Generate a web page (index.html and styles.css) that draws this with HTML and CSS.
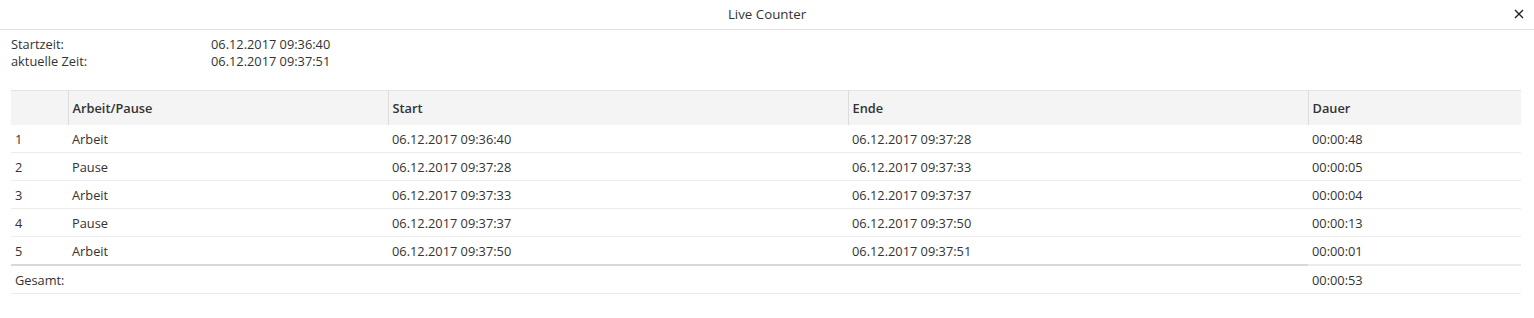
FILE: index.html
```html
<!DOCTYPE html>
<html lang="de">
<head>
    <meta charset="UTF-8">
    <title>Live Counter</title>
    <link rel="stylesheet" href="styles.css">
</head>
<body>

<div class="dialog">
    <div class="dialog-title">
        Live Counter
        <span class="dialog-close">
            <svg width="10" height="10" viewBox="0 0 10 10"><path d="M1 1L9 9M9 1L1 9" stroke="#222" stroke-width="1.4"/></svg>
        </span>
    </div>

    <div class="info">
        <div class="info-label">Startzeit:</div>
        <div class="info-value">06.12.2017 09:36:40</div>
        <div class="info-label">aktuelle Zeit:</div>
        <div class="info-value">06.12.2017 09:37:51</div>
    </div>

    <table class="counter-table">
        <colgroup>
            <col style="width: 57px">
            <col style="width: 320px">
            <col style="width: 460px">
            <col style="width: 460px">
            <col style="width: 213px">
        </colgroup>
        <thead>
            <tr>
                <th></th>
                <th>Arbeit/Pause</th>
                <th>Start</th>
                <th>Ende</th>
                <th>Dauer</th>
            </tr>
        </thead>
        <tbody>
            <tr><td>1</td><td>Arbeit</td><td>06.12.2017 09:36:40</td><td>06.12.2017 09:37:28</td><td>00:00:48</td></tr>
            <tr><td>2</td><td>Pause</td><td>06.12.2017 09:37:28</td><td>06.12.2017 09:37:33</td><td>00:00:05</td></tr>
            <tr><td>3</td><td>Arbeit</td><td>06.12.2017 09:37:33</td><td>06.12.2017 09:37:37</td><td>00:00:04</td></tr>
            <tr><td>4</td><td>Pause</td><td>06.12.2017 09:37:37</td><td>06.12.2017 09:37:50</td><td>00:00:13</td></tr>
            <tr><td>5</td><td>Arbeit</td><td>06.12.2017 09:37:50</td><td>06.12.2017 09:37:51</td><td>00:00:01</td></tr>
        </tbody>
        <tfoot>
            <tr>
                <td colspan="4" class="total-label">Gesamt:</td>
                <td class="total-value">00:00:53</td>
            </tr>
        </tfoot>
    </table>
</div>

</body>
</html>
```

FILE: styles.css
```css
body {
    margin: 0;
    font-family: "Open Sans", "DejaVu Sans", sans-serif;
    font-size: 12.8px;
    color: #333;
    background-color: #fff;
}

.dialog-title {
    position: relative;
    height: 29px;
    line-height: 29px;
    text-align: center;
    font-size: 13.3px;
    color: #333;
    border-bottom: 1px solid #e2e2e2;
}

.dialog-close {
    position: absolute;
    right: 10px;
    top: 9px;
    line-height: 0;
}

.info {
    display: grid;
    grid-template-columns: 200px auto;
    padding: 6px 11px 0;
    line-height: 17px;
}

.counter-table {
    margin: 20px 0 0 11px;
    width: 1510px;
    table-layout: fixed;
    border-collapse: collapse;
}

.counter-table th {
    height: 34px;
    padding: 0 4px;
    text-align: left;
    font-weight: 600;
    background-color: #f4f4f4;
    border-top: 1px solid #e4e4e4;
    border-left: 1px solid #dcdcdc;
}

.counter-table th:first-child {
    border-left: none;
}

.counter-table td {
    height: 27px;
    padding: 0 4px;
    border-bottom: 1px solid #ebebeb;
}

.counter-table tfoot td {
    height: 27px;
}

.counter-table .total-label {
    border-top: 2px solid #d8d8d8;
}

.counter-table .total-value {
    border-top: 2px solid #ececec;
}
```
